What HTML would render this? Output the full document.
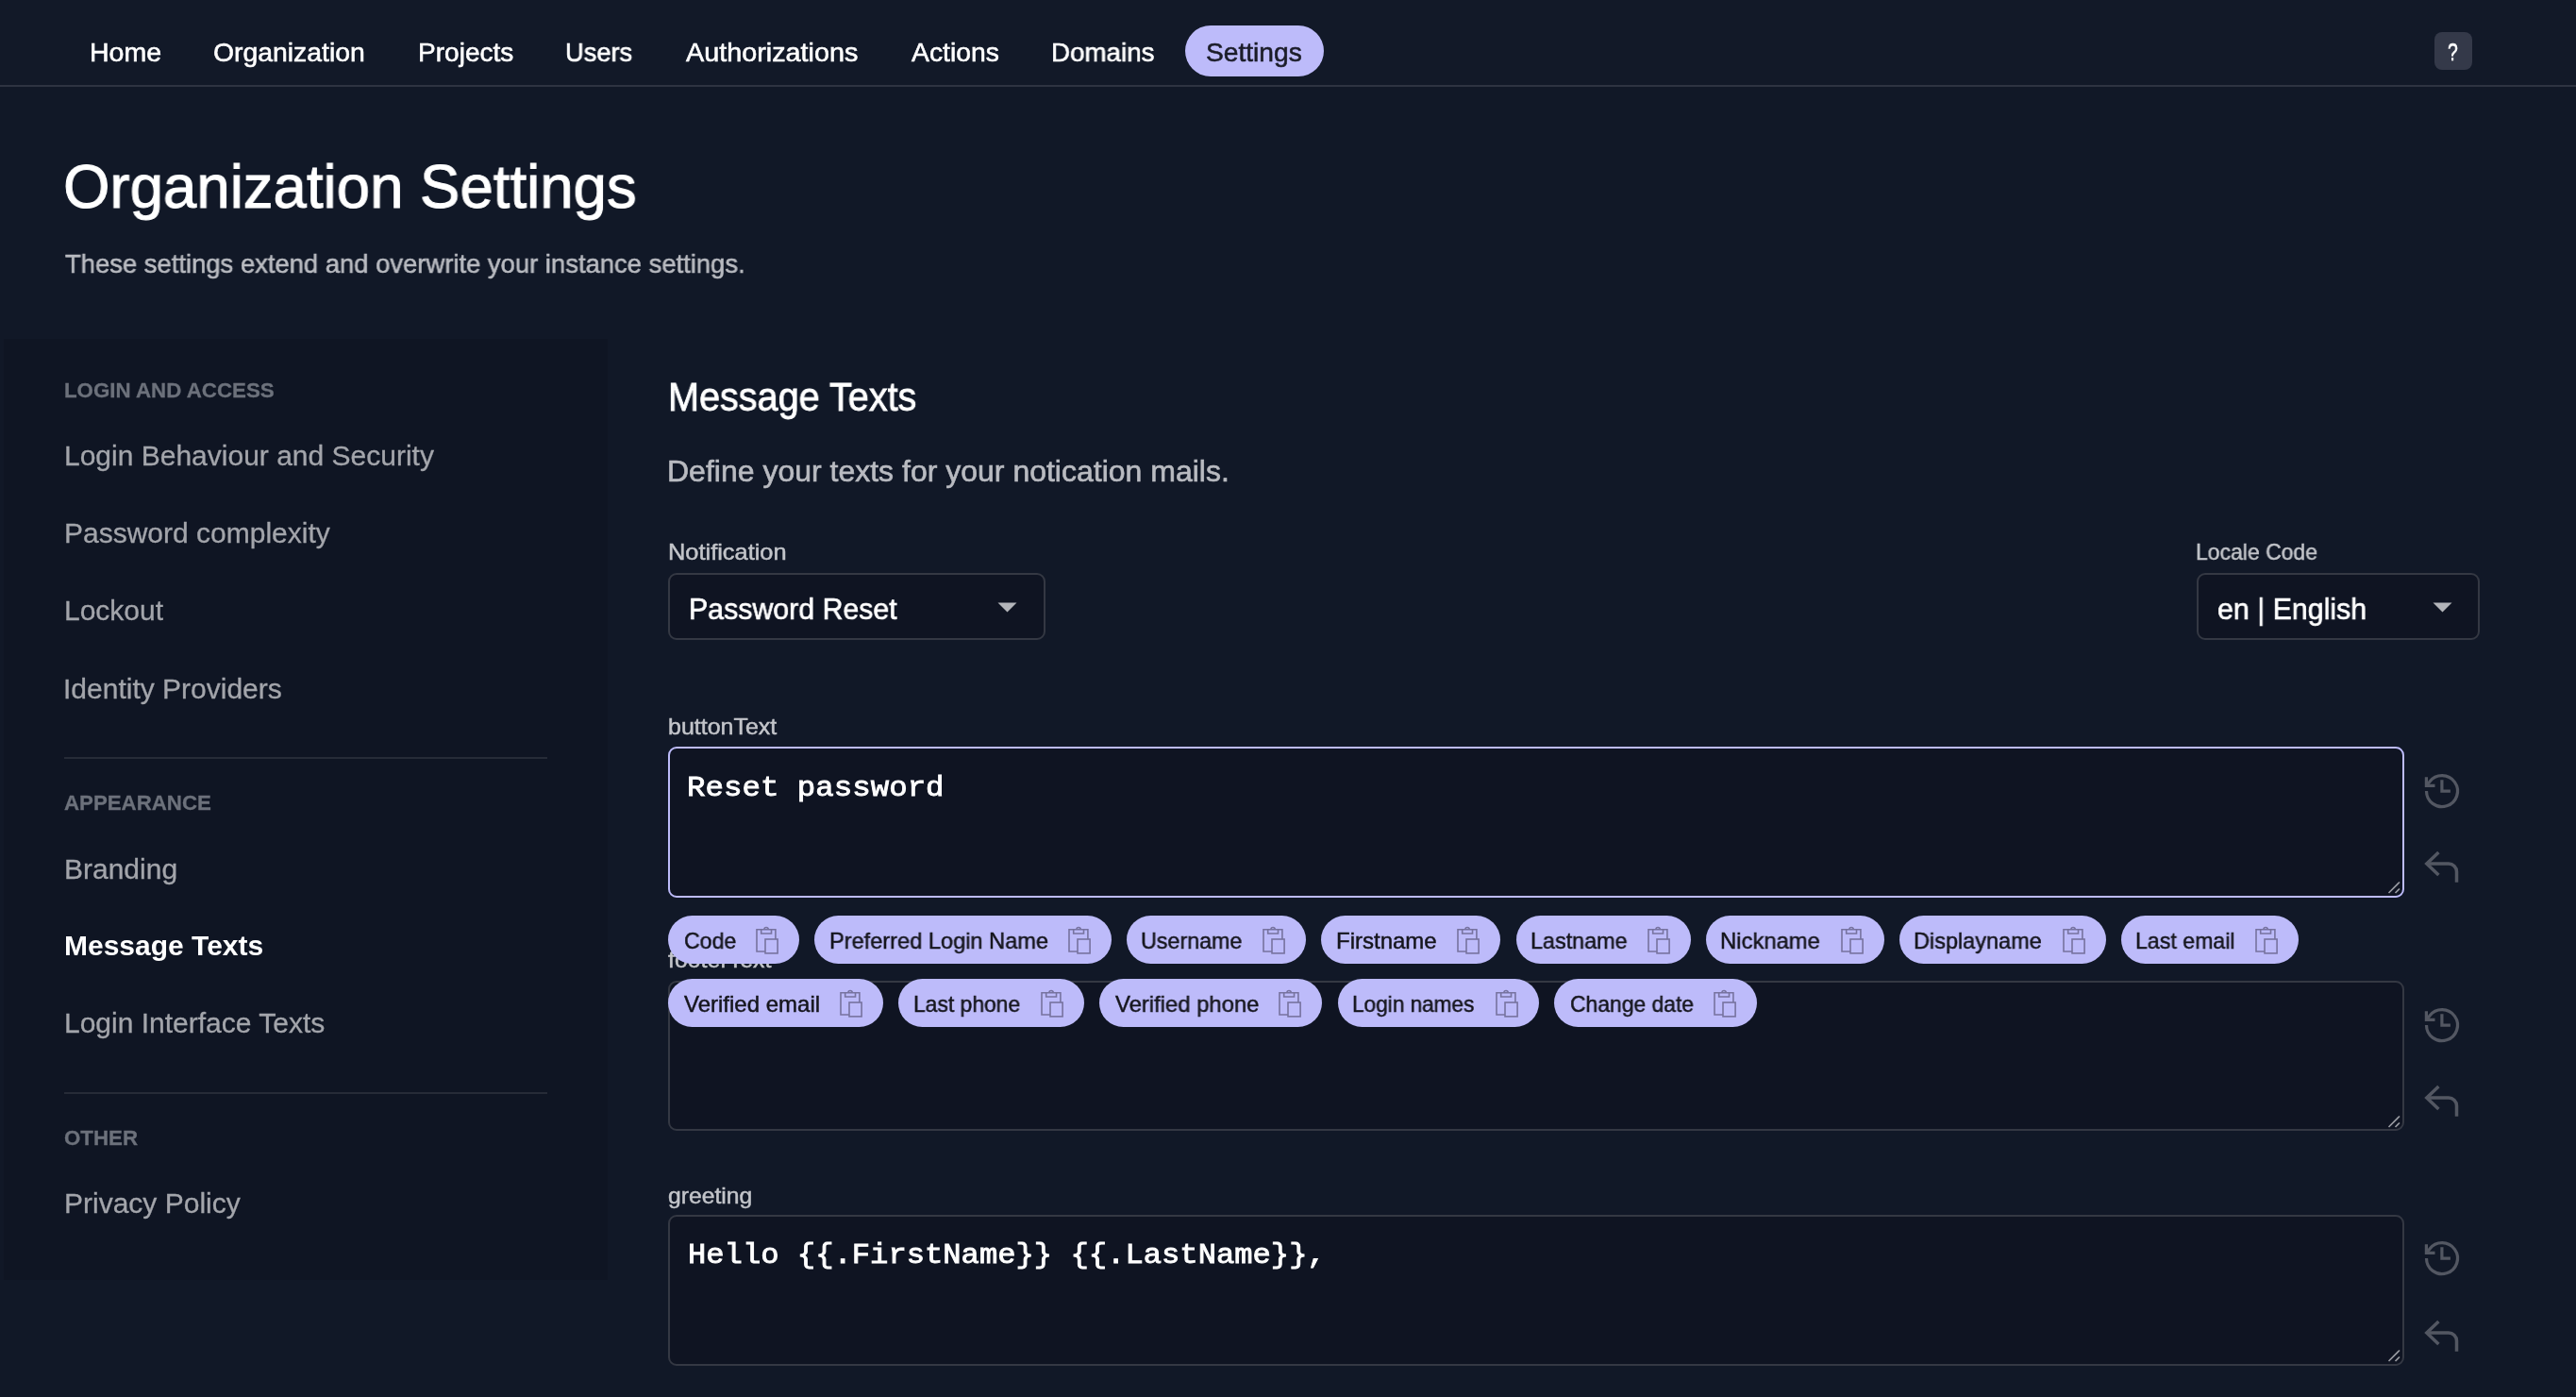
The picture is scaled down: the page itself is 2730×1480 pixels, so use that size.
<!DOCTYPE html><html><head><meta charset="utf-8"><style>
html,body{margin:0;padding:0;width:2730px;height:1480px;overflow:hidden;background:#111827;}
.t{position:absolute;white-space:nowrap;line-height:1;transform-origin:0 0;will-change:transform;}
.b{position:absolute;box-sizing:border-box;}
</style></head><body>
<div class="b" style="left:0;top:0;width:2730px;height:90px;background:#121928"></div>
<div class="b" style="left:0;top:90px;width:2730px;height:2px;background:#2e3341"></div>
<div class="b" style="left:1256px;top:27px;width:147px;height:54px;border-radius:27px;background:#bdbbfa"></div>
<div class="t" style="left:94.66px;top:42px;font-size:28px;font-family:'Liberation Sans', sans-serif;font-weight:400;color:#ffffff;transform:scaleX(1.0181);-webkit-text-stroke:0.56px #ffffff;">Home</div>
<div class="t" style="left:225.99px;top:42px;font-size:28px;font-family:'Liberation Sans', sans-serif;font-weight:400;color:#ffffff;transform:scaleX(1.0127);-webkit-text-stroke:0.56px #ffffff;">Organization</div>
<div class="t" style="left:442.50px;top:42px;font-size:28px;font-family:'Liberation Sans', sans-serif;font-weight:400;color:#ffffff;transform:scaleX(1.0020);-webkit-text-stroke:0.56px #ffffff;">Projects</div>
<div class="t" style="left:598.85px;top:42px;font-size:28px;font-family:'Liberation Sans', sans-serif;font-weight:400;color:#ffffff;transform:scaleX(0.9746);-webkit-text-stroke:0.56px #ffffff;">Users</div>
<div class="t" style="left:727.00px;top:42px;font-size:28px;font-family:'Liberation Sans', sans-serif;font-weight:400;color:#ffffff;transform:scaleX(1.0282);-webkit-text-stroke:0.56px #ffffff;">Authorizations</div>
<div class="t" style="left:966.00px;top:42px;font-size:28px;font-family:'Liberation Sans', sans-serif;font-weight:400;color:#ffffff;transform:scaleX(1.0110);-webkit-text-stroke:0.56px #ffffff;">Actions</div>
<div class="t" style="left:1114.02px;top:42px;font-size:28px;font-family:'Liberation Sans', sans-serif;font-weight:400;color:#ffffff;transform:scaleX(0.9907);-webkit-text-stroke:0.56px #ffffff;">Domains</div>
<div class="t" style="left:1277.99px;top:42px;font-size:28px;font-family:'Liberation Sans', sans-serif;font-weight:400;color:#1b1c28;transform:scaleX(1.0061);-webkit-text-stroke:0.56px #1b1c28;">Settings</div>
<div class="b" style="left:2580px;top:34px;width:40px;height:40px;border-radius:8px;background:#343949"></div>
<div class="t" style="left:2594.23px;top:43.3px;font-size:25px;font-family:'Liberation Sans', sans-serif;font-weight:400;color:#ffffff;transform:scaleX(0.7692);-webkit-text-stroke:0.7px #ffffff;">?</div>
<div class="t" style="left:67.44px;top:164.6px;font-size:65px;font-family:'Liberation Sans', sans-serif;font-weight:400;color:#ffffff;transform:scaleX(0.9778);-webkit-text-stroke:1.0px #ffffff;">Organization Settings</div>
<div class="t" style="left:68.70px;top:266px;font-size:28px;font-family:'Liberation Sans', sans-serif;font-weight:400;color:#b9bbc1;transform:scaleX(0.9789);-webkit-text-stroke:0.56px #b9bbc1;">These settings extend and overwrite your instance settings.</div>
<div class="b" style="left:4px;top:359px;width:640px;height:997px;background:#0f1523"></div>
<div class="t" style="left:67.99px;top:403px;font-size:22px;font-family:'Liberation Sans', sans-serif;font-weight:700;color:#6c717b;transform:scaleX(1.0138);-webkit-text-stroke:0.3px #6c717b;">LOGIN AND ACCESS</div>
<div class="t" style="left:67.50px;top:468px;font-size:30px;font-family:'Liberation Sans', sans-serif;font-weight:400;color:#a3a5ab;-webkit-text-stroke:0.3px #a3a5ab;">Login Behaviour and Security</div>
<div class="t" style="left:67.50px;top:550px;font-size:30px;font-family:'Liberation Sans', sans-serif;font-weight:400;color:#a3a5ab;-webkit-text-stroke:0.3px #a3a5ab;">Password complexity</div>
<div class="t" style="left:67.50px;top:632px;font-size:30px;font-family:'Liberation Sans', sans-serif;font-weight:400;color:#a3a5ab;-webkit-text-stroke:0.3px #a3a5ab;">Lockout</div>
<div class="t" style="left:66.50px;top:715px;font-size:30px;font-family:'Liberation Sans', sans-serif;font-weight:400;color:#a3a5ab;-webkit-text-stroke:0.3px #a3a5ab;">Identity Providers</div>
<div class="b" style="left:68px;top:802px;width:512px;height:2px;background:#262b37"></div>
<div class="t" style="left:67.99px;top:840px;font-size:22px;font-family:'Liberation Sans', sans-serif;font-weight:700;color:#6c717b;transform:scaleX(1.0118);-webkit-text-stroke:0.3px #6c717b;">APPEARANCE</div>
<div class="t" style="left:67.50px;top:906px;font-size:30px;font-family:'Liberation Sans', sans-serif;font-weight:400;color:#a3a5ab;-webkit-text-stroke:0.3px #a3a5ab;">Branding</div>
<div class="t" style="left:67.50px;top:987px;font-size:30px;font-family:'Liberation Sans', sans-serif;font-weight:700;color:#ffffff;">Message Texts</div>
<div class="t" style="left:67.50px;top:1069px;font-size:30px;font-family:'Liberation Sans', sans-serif;font-weight:400;color:#a3a5ab;-webkit-text-stroke:0.3px #a3a5ab;">Login Interface Texts</div>
<div class="b" style="left:68px;top:1157px;width:512px;height:2px;background:#262b37"></div>
<div class="t" style="left:67.99px;top:1195px;font-size:22px;font-family:'Liberation Sans', sans-serif;font-weight:700;color:#6c717b;transform:scaleX(1.0133);-webkit-text-stroke:0.3px #6c717b;">OTHER</div>
<div class="t" style="left:67.50px;top:1260px;font-size:30px;font-family:'Liberation Sans', sans-serif;font-weight:400;color:#a3a5ab;-webkit-text-stroke:0.3px #a3a5ab;">Privacy Policy</div>
<div class="t" style="left:707.87px;top:399.8px;font-size:42px;font-family:'Liberation Sans', sans-serif;font-weight:400;color:#ffffff;transform:scaleX(0.9429);-webkit-text-stroke:0.8px #ffffff;">Message Texts</div>
<div class="t" style="left:707.30px;top:482.5px;font-size:32px;font-family:'Liberation Sans', sans-serif;font-weight:400;color:#b9bbc1;-webkit-text-stroke:0.64px #b9bbc1;">Define your texts for your notication mails.</div>
<div class="t" style="left:708.18px;top:573.2px;font-size:24px;font-family:'Liberation Sans', sans-serif;font-weight:400;color:#c3c5ca;transform:scaleX(1.0578);-webkit-text-stroke:0.48px #c3c5ca;">Notification</div>
<div class="b" style="left:708px;top:607px;width:400px;height:71px;border:2px solid #343843;border-radius:9px;background:#0f1422"></div>
<div class="t" style="left:730.31px;top:628.7px;font-size:32px;font-family:'Liberation Sans', sans-serif;font-weight:400;color:#ffffff;transform:scaleX(0.9472);-webkit-text-stroke:0.64px #ffffff;">Password Reset</div>
<svg class="b" style="left:1057px;top:638px" width="22" height="12"><path d="M0.5 0.5 L20.5 0.5 L10.5 10.5 Z" fill="#b3b5ba"/></svg>
<div class="t" style="left:2326.79px;top:573.2px;font-size:24px;font-family:'Liberation Sans', sans-serif;font-weight:400;color:#c3c5ca;transform:scaleX(0.9568);-webkit-text-stroke:0.48px #c3c5ca;">Locale Code</div>
<div class="b" style="left:2328px;top:607px;width:300px;height:71px;border:2px solid #343843;border-radius:9px;background:#0f1422"></div>
<div class="t" style="left:2349.75px;top:628.7px;font-size:32px;font-family:'Liberation Sans', sans-serif;font-weight:400;color:#ffffff;transform:scaleX(0.9494);-webkit-text-stroke:0.64px #ffffff;">en | English</div>
<svg class="b" style="left:2578px;top:638px" width="22" height="12"><path d="M0.5 0.5 L20.5 0.5 L10.5 10.5 Z" fill="#b3b5ba"/></svg>
<div class="t" style="left:708.46px;top:758px;font-size:24px;font-family:'Liberation Sans', sans-serif;font-weight:400;color:#c3c5ca;transform:scaleX(1.0409);-webkit-text-stroke:0.48px #c3c5ca;">buttonText</div>
<div class="b" style="left:708px;top:791px;width:1840px;height:160px;border:2px solid #bdbbfa;border-radius:9px;background:#0f1422"></div>
<div class="t" style="left:728.04px;top:819.7px;font-size:30px;font-family:'Liberation Mono', monospace;font-weight:400;color:#ffffff;transform:scaleX(1.0815);-webkit-text-stroke:0.9px #ffffff;">Reset password</div>
<svg class="b" style="left:2528px;top:931px" width="16" height="16" viewBox="0 0 16 16" stroke="#9a9ca3" stroke-width="1.6">
<path d="M3.5 15 L15 3.5" /><path d="M10.5 15 L15 10.5" />
</svg>
<svg class="b" style="left:2560px;top:809.7px" width="56" height="56" viewBox="0 0 56 56" fill="none" stroke="#535762" stroke-width="3.2">
<path d="M11.5 28 A16.5 16.5 0 1 0 14.8 18.2 L12.6 21" />
<path d="M11.4 13.2 L11.4 22.4 L20.5 22.4" />
<path d="M27.9 16.2 L27.9 28.2 L36.9 28.2" />
</svg>
<svg class="b" style="left:2560px;top:887.7px" width="56" height="56" viewBox="0 0 56 56" fill="none" stroke="#535762" stroke-width="3.5">
<path d="M24.4 15.1 L11.8 27 L24.4 38.9" />
<path d="M11.8 27 L35 27 A8.5 8.5 0 0 1 43.5 35.5 L43.5 46.8" />
</svg>
<div class="t" style="left:708.00px;top:1005px;font-size:24px;font-family:'Liberation Sans', sans-serif;font-weight:400;color:#c3c5ca;transform:scaleX(1.0377);-webkit-text-stroke:0.48px #c3c5ca;">footerText</div>
<div class="b" style="left:708px;top:1039px;width:1840px;height:159px;border:2px solid #343843;border-radius:9px;background:#0f1422"></div>
<svg class="b" style="left:2528px;top:1179px" width="16" height="16" viewBox="0 0 16 16" stroke="#9a9ca3" stroke-width="1.6">
<path d="M3.5 15 L15 3.5" /><path d="M10.5 15 L15 10.5" />
</svg>
<svg class="b" style="left:2560px;top:1057.9px" width="56" height="56" viewBox="0 0 56 56" fill="none" stroke="#535762" stroke-width="3.2">
<path d="M11.5 28 A16.5 16.5 0 1 0 14.8 18.2 L12.6 21" />
<path d="M11.4 13.2 L11.4 22.4 L20.5 22.4" />
<path d="M27.9 16.2 L27.9 28.2 L36.9 28.2" />
</svg>
<svg class="b" style="left:2560px;top:1136px" width="56" height="56" viewBox="0 0 56 56" fill="none" stroke="#535762" stroke-width="3.5">
<path d="M24.4 15.1 L11.8 27 L24.4 38.9" />
<path d="M11.8 27 L35 27 A8.5 8.5 0 0 1 43.5 35.5 L43.5 46.8" />
</svg>
<div class="t" style="left:707.97px;top:1254.7px;font-size:24px;font-family:'Liberation Sans', sans-serif;font-weight:400;color:#c3c5ca;transform:scaleX(1.0282);-webkit-text-stroke:0.48px #c3c5ca;">greeting</div>
<div class="b" style="left:708px;top:1287px;width:1840px;height:160px;border:2px solid #343843;border-radius:9px;background:#0f1422"></div>
<div class="t" style="left:728.86px;top:1314.7px;font-size:30px;font-family:'Liberation Mono', monospace;font-weight:400;color:#ffffff;transform:scaleX(1.0725);-webkit-text-stroke:0.9px #ffffff;">Hello {{.FirstName}} {{.LastName}},</div>
<svg class="b" style="left:2528px;top:1427px" width="16" height="16" viewBox="0 0 16 16" stroke="#9a9ca3" stroke-width="1.6">
<path d="M3.5 15 L15 3.5" /><path d="M10.5 15 L15 10.5" />
</svg>
<svg class="b" style="left:2560px;top:1305.3px" width="56" height="56" viewBox="0 0 56 56" fill="none" stroke="#535762" stroke-width="3.2">
<path d="M11.5 28 A16.5 16.5 0 1 0 14.8 18.2 L12.6 21" />
<path d="M11.4 13.2 L11.4 22.4 L20.5 22.4" />
<path d="M27.9 16.2 L27.9 28.2 L36.9 28.2" />
</svg>
<svg class="b" style="left:2560px;top:1385px" width="56" height="56" viewBox="0 0 56 56" fill="none" stroke="#535762" stroke-width="3.5">
<path d="M24.4 15.1 L11.8 27 L24.4 38.9" />
<path d="M11.8 27 L35 27 A8.5 8.5 0 0 1 43.5 35.5 L43.5 46.8" />
</svg>
<div class="b" style="left:708px;top:970px;width:139px;height:51px;border-radius:26px;background:#bdbbfa"></div>
<div class="t" style="left:724.64px;top:984.6px;font-size:24px;font-family:'Liberation Sans', sans-serif;font-weight:400;color:#15151c;transform:scaleX(0.9636);-webkit-text-stroke:0.48px #15151c;">Code</div>
<svg class="b" style="left:800px;top:981px" width="27" height="32" viewBox="0 0 27 32" fill="none" stroke="#77739f" stroke-width="1.6">
<path d="M11 27 L2 27 L2 3.7 L21.9 3.7 L21.9 14" />
<rect x="11" y="14" width="13.1" height="14.9" />
<path d="M6.7 3.7 L6.7 8 L17.5 8 L17.5 3.7" />
<path d="M9.9 3.7 A2.2 2.2 0 0 1 14.3 3.7" />
</svg>
<div class="b" style="left:863px;top:970px;width:315px;height:51px;border-radius:26px;background:#bdbbfa"></div>
<div class="t" style="left:878.63px;top:984.6px;font-size:24px;font-family:'Liberation Sans', sans-serif;font-weight:400;color:#15151c;transform:scaleX(0.9828);-webkit-text-stroke:0.48px #15151c;">Preferred Login Name</div>
<svg class="b" style="left:1131px;top:981px" width="27" height="32" viewBox="0 0 27 32" fill="none" stroke="#77739f" stroke-width="1.6">
<path d="M11 27 L2 27 L2 3.7 L21.9 3.7 L21.9 14" />
<rect x="11" y="14" width="13.1" height="14.9" />
<path d="M6.7 3.7 L6.7 8 L17.5 8 L17.5 3.7" />
<path d="M9.9 3.7 A2.2 2.2 0 0 1 14.3 3.7" />
</svg>
<div class="b" style="left:1194px;top:970px;width:190px;height:51px;border-radius:26px;background:#bdbbfa"></div>
<div class="t" style="left:1209.16px;top:984.6px;font-size:24px;font-family:'Liberation Sans', sans-serif;font-weight:400;color:#15151c;transform:scaleX(0.9704);-webkit-text-stroke:0.48px #15151c;">Username</div>
<svg class="b" style="left:1337px;top:981px" width="27" height="32" viewBox="0 0 27 32" fill="none" stroke="#77739f" stroke-width="1.6">
<path d="M11 27 L2 27 L2 3.7 L21.9 3.7 L21.9 14" />
<rect x="11" y="14" width="13.1" height="14.9" />
<path d="M6.7 3.7 L6.7 8 L17.5 8 L17.5 3.7" />
<path d="M9.9 3.7 A2.2 2.2 0 0 1 14.3 3.7" />
</svg>
<div class="b" style="left:1400px;top:970px;width:190px;height:51px;border-radius:26px;background:#bdbbfa"></div>
<div class="t" style="left:1416.10px;top:984.6px;font-size:24px;font-family:'Liberation Sans', sans-serif;font-weight:400;color:#15151c;-webkit-text-stroke:0.48px #15151c;">Firstname</div>
<svg class="b" style="left:1543px;top:981px" width="27" height="32" viewBox="0 0 27 32" fill="none" stroke="#77739f" stroke-width="1.6">
<path d="M11 27 L2 27 L2 3.7 L21.9 3.7 L21.9 14" />
<rect x="11" y="14" width="13.1" height="14.9" />
<path d="M6.7 3.7 L6.7 8 L17.5 8 L17.5 3.7" />
<path d="M9.9 3.7 A2.2 2.2 0 0 1 14.3 3.7" />
</svg>
<div class="b" style="left:1607px;top:970px;width:185px;height:51px;border-radius:26px;background:#bdbbfa"></div>
<div class="t" style="left:1622.35px;top:984.6px;font-size:24px;font-family:'Liberation Sans', sans-serif;font-weight:400;color:#15151c;transform:scaleX(0.9735);-webkit-text-stroke:0.48px #15151c;">Lastname</div>
<svg class="b" style="left:1745px;top:981px" width="27" height="32" viewBox="0 0 27 32" fill="none" stroke="#77739f" stroke-width="1.6">
<path d="M11 27 L2 27 L2 3.7 L21.9 3.7 L21.9 14" />
<rect x="11" y="14" width="13.1" height="14.9" />
<path d="M6.7 3.7 L6.7 8 L17.5 8 L17.5 3.7" />
<path d="M9.9 3.7 A2.2 2.2 0 0 1 14.3 3.7" />
</svg>
<div class="b" style="left:1808px;top:970px;width:189px;height:51px;border-radius:26px;background:#bdbbfa"></div>
<div class="t" style="left:1823.42px;top:984.6px;font-size:24px;font-family:'Liberation Sans', sans-serif;font-weight:400;color:#15151c;transform:scaleX(0.9923);-webkit-text-stroke:0.48px #15151c;">Nickname</div>
<svg class="b" style="left:1950px;top:981px" width="27" height="32" viewBox="0 0 27 32" fill="none" stroke="#77739f" stroke-width="1.6">
<path d="M11 27 L2 27 L2 3.7 L21.9 3.7 L21.9 14" />
<rect x="11" y="14" width="13.1" height="14.9" />
<path d="M6.7 3.7 L6.7 8 L17.5 8 L17.5 3.7" />
<path d="M9.9 3.7 A2.2 2.2 0 0 1 14.3 3.7" />
</svg>
<div class="b" style="left:2013px;top:970px;width:219px;height:51px;border-radius:26px;background:#bdbbfa"></div>
<div class="t" style="left:2028.44px;top:984.6px;font-size:24px;font-family:'Liberation Sans', sans-serif;font-weight:400;color:#15151c;transform:scaleX(0.9779);-webkit-text-stroke:0.48px #15151c;">Displayname</div>
<svg class="b" style="left:2185px;top:981px" width="27" height="32" viewBox="0 0 27 32" fill="none" stroke="#77739f" stroke-width="1.6">
<path d="M11 27 L2 27 L2 3.7 L21.9 3.7 L21.9 14" />
<rect x="11" y="14" width="13.1" height="14.9" />
<path d="M6.7 3.7 L6.7 8 L17.5 8 L17.5 3.7" />
<path d="M9.9 3.7 A2.2 2.2 0 0 1 14.3 3.7" />
</svg>
<div class="b" style="left:2248px;top:970px;width:188px;height:51px;border-radius:26px;background:#bdbbfa"></div>
<div class="t" style="left:2263.37px;top:984.6px;font-size:24px;font-family:'Liberation Sans', sans-serif;font-weight:400;color:#15151c;transform:scaleX(0.9651);-webkit-text-stroke:0.48px #15151c;">Last email</div>
<svg class="b" style="left:2389px;top:981px" width="27" height="32" viewBox="0 0 27 32" fill="none" stroke="#77739f" stroke-width="1.6">
<path d="M11 27 L2 27 L2 3.7 L21.9 3.7 L21.9 14" />
<rect x="11" y="14" width="13.1" height="14.9" />
<path d="M6.7 3.7 L6.7 8 L17.5 8 L17.5 3.7" />
<path d="M9.9 3.7 A2.2 2.2 0 0 1 14.3 3.7" />
</svg>
<div class="b" style="left:708px;top:1037px;width:228px;height:51px;border-radius:26px;background:#bdbbfa"></div>
<div class="t" style="left:724.60px;top:1051.6px;font-size:24px;font-family:'Liberation Sans', sans-serif;font-weight:400;color:#15151c;-webkit-text-stroke:0.48px #15151c;">Verified email</div>
<svg class="b" style="left:889px;top:1048px" width="27" height="32" viewBox="0 0 27 32" fill="none" stroke="#77739f" stroke-width="1.6">
<path d="M11 27 L2 27 L2 3.7 L21.9 3.7 L21.9 14" />
<rect x="11" y="14" width="13.1" height="14.9" />
<path d="M6.7 3.7 L6.7 8 L17.5 8 L17.5 3.7" />
<path d="M9.9 3.7 A2.2 2.2 0 0 1 14.3 3.7" />
</svg>
<div class="b" style="left:952px;top:1037px;width:197px;height:51px;border-radius:26px;background:#bdbbfa"></div>
<div class="t" style="left:967.89px;top:1051.6px;font-size:24px;font-family:'Liberation Sans', sans-serif;font-weight:400;color:#15151c;transform:scaleX(0.9526);-webkit-text-stroke:0.48px #15151c;">Last phone</div>
<svg class="b" style="left:1102px;top:1048px" width="27" height="32" viewBox="0 0 27 32" fill="none" stroke="#77739f" stroke-width="1.6">
<path d="M11 27 L2 27 L2 3.7 L21.9 3.7 L21.9 14" />
<rect x="11" y="14" width="13.1" height="14.9" />
<path d="M6.7 3.7 L6.7 8 L17.5 8 L17.5 3.7" />
<path d="M9.9 3.7 A2.2 2.2 0 0 1 14.3 3.7" />
</svg>
<div class="b" style="left:1165px;top:1037px;width:236px;height:51px;border-radius:26px;background:#bdbbfa"></div>
<div class="t" style="left:1181.61px;top:1051.6px;font-size:24px;font-family:'Liberation Sans', sans-serif;font-weight:400;color:#15151c;transform:scaleX(0.9934);-webkit-text-stroke:0.48px #15151c;">Verified phone</div>
<svg class="b" style="left:1354px;top:1048px" width="27" height="32" viewBox="0 0 27 32" fill="none" stroke="#77739f" stroke-width="1.6">
<path d="M11 27 L2 27 L2 3.7 L21.9 3.7 L21.9 14" />
<rect x="11" y="14" width="13.1" height="14.9" />
<path d="M6.7 3.7 L6.7 8 L17.5 8 L17.5 3.7" />
<path d="M9.9 3.7 A2.2 2.2 0 0 1 14.3 3.7" />
</svg>
<div class="b" style="left:1418px;top:1037px;width:213px;height:51px;border-radius:26px;background:#bdbbfa"></div>
<div class="t" style="left:1433.32px;top:1051.6px;font-size:24px;font-family:'Liberation Sans', sans-serif;font-weight:400;color:#15151c;transform:scaleX(0.9407);-webkit-text-stroke:0.48px #15151c;">Login names</div>
<svg class="b" style="left:1584px;top:1048px" width="27" height="32" viewBox="0 0 27 32" fill="none" stroke="#77739f" stroke-width="1.6">
<path d="M11 27 L2 27 L2 3.7 L21.9 3.7 L21.9 14" />
<rect x="11" y="14" width="13.1" height="14.9" />
<path d="M6.7 3.7 L6.7 8 L17.5 8 L17.5 3.7" />
<path d="M9.9 3.7 A2.2 2.2 0 0 1 14.3 3.7" />
</svg>
<div class="b" style="left:1647px;top:1037px;width:215px;height:51px;border-radius:26px;background:#bdbbfa"></div>
<div class="t" style="left:1663.55px;top:1051.6px;font-size:24px;font-family:'Liberation Sans', sans-serif;font-weight:400;color:#15151c;transform:scaleX(0.9533);-webkit-text-stroke:0.48px #15151c;">Change date</div>
<svg class="b" style="left:1815px;top:1048px" width="27" height="32" viewBox="0 0 27 32" fill="none" stroke="#77739f" stroke-width="1.6">
<path d="M11 27 L2 27 L2 3.7 L21.9 3.7 L21.9 14" />
<rect x="11" y="14" width="13.1" height="14.9" />
<path d="M6.7 3.7 L6.7 8 L17.5 8 L17.5 3.7" />
<path d="M9.9 3.7 A2.2 2.2 0 0 1 14.3 3.7" />
</svg>
</body></html>
